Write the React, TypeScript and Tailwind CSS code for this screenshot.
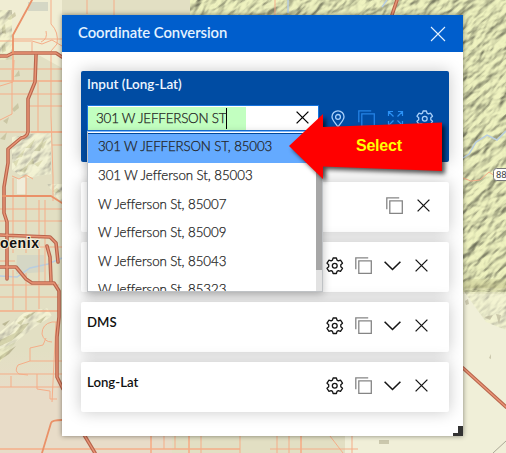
import type { ReactNode } from "react";

const suggestions = [
  "301 W JEFFERSON ST, 85003",
  "301 W Jefferson St, 85003",
  "W Jefferson St, 85007",
  "W Jefferson St, 85009",
  "W Jefferson St, 85043",
  "W Jefferson St, 85323",
];

function Icon({ children, className = "" }: { children: ReactNode; className?: string }) {
  return (
    <svg viewBox="0 0 18 18" fill="none" stroke="currentColor" strokeWidth="1.3" className={`h-[18px] w-[18px] shrink-0 ${className}`}>
      {children}
    </svg>
  );
}
const Gear = ({ className }: { className?: string }) => (
  <Icon className={className}>
    <path strokeLinejoin="round" d="M7.1 1h3.3l.6 2.1 1.4.8 2.1-.7 2 3-1.7 1.5v2.1l1.7 1.5-2 3-2.1-.7-1.4.8-.6 2.1H7.1l-.6-2.1-1.4-.8-2.1.7-2-3 1.7-1.5V7.7L1 6.2l2-3 2.1.7 1.4-.8z" />
    <circle cx="8.75" cy="8.75" r="2.4" />
  </Icon>
);
const Copy = ({ className }: { className?: string }) => (
  <Icon className={className}>
    <path d="M.8 12.3V.8h12.4M3.8 3.8h12.5v12.5H3.8z" />
  </Icon>
);
const Chevron = () => (
  <Icon><path strokeWidth="1.6" d="m.6 4.7 7.9 7.8 7.9-7.8" /></Icon>
);
const Close = () => (
  <Icon><path d="m2.6 2.6 11.8 11.8M14.4 2.6 2.6 14.4" /></Icon>
);
const Pin = () => (
  <Icon>
    <path d="M9 17C7.5 14 3 10.5 3 6.8a6 6 0 0 1 12 0C15 10.5 10.5 14 9 17z" />
    <circle cx="9" cy="6.9" r="2.4" />
  </Icon>
);
const Expand = () => (
  <Icon className="text-[#2b91f5]">
    <path strokeWidth="1.2" d="M1.5 6V1.5H6M1.5 1.5l5 5M11 1.5h4.5V6M15.5 1.5l-5 5M1.5 11v4.5H6M1.5 15.5l5-5M11 15.5h4.5V11M15.5 15.5l-5-5" />
  </Icon>
);

const highways =
  "M0 56h7l6-3h43l6 4M36 55l-1 27-7 17v33q-1 5-7 6l-13 11v14l-4 24v26l3 9v57M0 267h16l10 12 6 4h22l5 8v26l-2 20v40l6 12M0 235l50 2 6 6 2 19M47 246l3 11 1 24M83 433l12 20M463 368l43 39M397 0l-5 15";

function BaseMap() {
  return (
    <svg viewBox="0 0 506 453" className="absolute inset-0 h-full w-full">
      <defs>
        <filter id="relief" x="0" y="0" width="100%" height="100%" colorInterpolationFilters="sRGB">
          <feTurbulence type="fractalNoise" baseFrequency="0.055 0.12" numOctaves="3" seed="8" />
          <feColorMatrix values="0 0 0 0 0  0 0 0 0 0  0 0 0 0 0  1 0 0 0 0" />
          <feDiffuseLighting surfaceScale="4" diffuseConstant="1.12" lightingColor="#e2e6b4">
            <feDistantLight azimuth="270" elevation="62" />
          </feDiffuseLighting>
        </filter>
        <clipPath id="hills"><path d="M455 0h51v292H455zM190 0h280v15H190z" /></clipPath>
        <clipPath id="ridge"><path d="m0 332 24-19 23-5 5 8-19 12-17 14-16 20zM12 137l39-6v43l-26 4-13-8zM47 184h15v20zM0 10h12v50H0zM463 290h43v40l-20-8z" /></clipPath>
        <filter id="soft"><feGaussianBlur stdDeviation="5" /></filter>
        <linearGradient id="south" x1="0" y1="0" x2="0" y2="1">
          <stop offset="0" stopColor="#e8dfc8" stopOpacity="0" />
          <stop offset=".4" stopColor="#e8dcc8" />
        </linearGradient>
      </defs>
      <path fill="#e2dfc3" d="M0 0h506v453H0z" />
      <path fill="#f0edd3" d="M0 0h62v68L35 53H0z" />
      <path fill="#d9dcb2" d="M190 0h316v292H190z" />
      <path fill="#f0efd8" d="M440 288h66v165H345v-20h95z" />
      <path fill="url(#south)" d="M0 350h62v83h110v20H0z" />
      <path fill="#f0edda" d="M12 137 51 131v43L25 178 12 170zM17 178h9v16h-9zM47 184h15v20z" />
      <g clipPath="url(#hills)" opacity=".65">
        <rect x="100" y="-200" width="650" height="700" filter="url(#relief)" transform="rotate(-42 480 140)" />
      </g>
      <path fill="#b5b47c" opacity=".5" filter="url(#soft)" d="M458 281h53v11h-53z" />
      <g fill="#bbb790" opacity=".6">
        <path d="m7 19 8-7 1 4-6 4zM2 27l3-3 1 10-4-1zM2 46l3-3 1 8-4 2zM14 77l5-7 1 6zM12 109l6-6 1 5-5 4zM0 139l7-7-2 8zM3 121l6-4-2 7z" />
        <path d="m16 158 9-9-3 8zM25 148l10-9-4 9zM34 151l11-14-5 14zM19 171l10-7-4 9zM27 165l6-7 1 6zM34 164l9-4-5 7zM13 162l6-3-3 8zM39 146l8-6-4 9zM52 191l5-3 4 4-6 1z" />
      </g>
      <path fill="#f1edda" d="m0 332 24-19 23-5 5 8-19 12-17 14-16 7z" />
      <path fill="#a49e76" opacity=".6" d="m0 340 15-7 6-8 8-2-7 9-11 9-11 5zM0 356l16-10-7 8-9 6zM23 317l14-6-10 8zM36 322l10-6-5 7zM2 324l8-4-5 6zM17 323l8-5-4 7z" />
      <g clipPath="url(#ridge)" opacity=".35">
        <rect x="-300" y="-200" width="900" height="900" filter="url(#relief)" transform="rotate(-42 30 240)" />
      </g>
      <path fill="#d5d7c5" d="M17 255h27v17l-28 2zM28 2h20v9H28z" />
      <path fill="none" stroke="#b8cde0" strokeWidth="1.5" d="m0 276 17 1 13-9 18-4 14-6M463 158l6-4 7-12 11-7 10 5 9-9M288 0v13M382 7l5-7" />
      <g fill="none" stroke="#f5ad88">
        <path d="M51 0v24q8 8 6 20l-6 7v65l2 61v24M13 39h49M0 69h62M12 70v24M0 94h62M0 41h32l10 3 10-4 10 6M29 106h33M0 132h62M12 176l7 3 7-4 7 4M13 178v75M26 176v77M39 200v84M45 200v84M0 209h62M0 221h62M38 82v50M14 60 13 82 0 86M12 94v20l-12 6M32 53V42M46 31q2 8-5 11M52 145h10M0 247h62M0 261h15M0 285h59M0 297h58M13 270v40M26 273v37M39 282v27M11 376v11M0 374h62M0 387h60M52 402l4-80M57 322h-5q-10 2-10 12 2 8 10 8M46 338l-3 7-13 3v13l-12 4q-4 6 1 9l9 1M30 361h32M37 374v15l13 2v8h7M87 0v14M114 0v15" />
        <path strokeWidth="1.6" d="M0 81h62M13 53v28M31 132h31M151 434v19M189 434v19M301 436v17M0 449h240M0 311h59" />
        <path d="M164 436v13M175 436v13M201 436v17M240 436v17M277 436v17M289 436v17M270 449h88M330 436l13 17M463 178l8 3 9-1 9-8 6 4M275 0v15M352 433v20" />
      </g>
      <g fill="none" strokeLinecap="round" strokeLinejoin="round">
        <path stroke="#b8654d" strokeWidth="3.6" d={highways} />
        <path stroke="#e99475" strokeWidth="1.4" d={highways} />
        <path stroke="#ea9168" strokeWidth="1.8" d="M32 0 13 35v18M3 196h48l11 7M42 453l9-30q1-3 11-3" />
      </g>
      <path fill="#b3ad91" opacity=".6" d="m465 301 3-2 1 5-3 1zM484 317l9-2-3 5zM496 314l5 1-2 9zM489 358l2-4v5zM379 440h10v4h-10z" />
      <path stroke="#aaa796" d="m493 453 13-12" />
      <rect x="493.5" y="168.5" width="19" height="12" rx="3" fill="white" stroke="#777" />
      <text x="496" y="178" fontSize="9.5" fill="#444" fontFamily="Roboto, sans-serif">88</text>
      <text x="0" y="248" fontSize="14" fontWeight="700" fill="#111" stroke="#f4edda" strokeWidth="2" paintOrder="stroke" textLength="39" className="font-['Liberation_Sans',sans-serif]">oenix</text>
    </svg>
  );
}

function FormatCard({ label, brief = false }: { label: string; brief?: boolean }) {
  return (
    <section className="flex h-[50px] justify-between rounded-[2px] bg-white pl-[6px] shadow-[0_0_16px_rgba(0,0,0,0.22)]">
      <h2 className="pt-[11px] text-[13.2px] leading-[18px] font-semibold text-[#111]">{label}</h2>
      <div className={`flex h-[47px] items-center gap-[11px] text-[#151515] ${brief ? "pr-[16px]" : "pr-[18px]"}`}>
        {!brief && <Gear />}
        <Copy className="text-[#858585]" />
        {!brief && <Chevron />}
        <Close />
      </div>
    </section>
  );
}

export default function App() {
  return (
    <div className="relative h-[453px] w-[506px] overflow-hidden pt-[15px] pl-[62px] font-[Lato,sans-serif]">
      <BaseMap />
      <main className="relative h-[421px] w-[401px] bg-white shadow-[0_0_5px_rgba(0,0,0,0.45)]">
        <header className="flex h-[37px] items-center justify-between bg-[#005ecc] pr-[16px] pl-[16px] text-[#e4f2ff]">
          <h1 className="pb-[2px] text-[14.8px] font-semibold tracking-[-0.05px] whitespace-nowrap">Coordinate Conversion</h1>
          <svg viewBox="0 0 18 18" className="mt-px h-[18px] w-[18px]" stroke="currentColor" strokeWidth="1.1"><path d="m2 2 14 14M16 2 2 16" /></svg>
        </header>
        <div className="flex flex-col gap-[10px] pt-[19px] pr-[14px] pl-[19px]">
          <section className="relative mb-[10px] h-[91px] rounded-[2px] bg-[#004ca3] pt-[4px] pl-[6px] shadow-[0_0_16px_rgba(0,0,0,0.22)]">
            <h2 className="h-[30px] text-[13.5px] leading-[18px] font-semibold text-[#edf6ff]">Input (Long-Lat)</h2>
            <div className="flex items-center">
              <div className="flex h-[26px] w-[232px] items-center justify-between border border-[#1673dc] bg-white pr-[6px]">
                <div className="flex h-[23px] w-[158px] items-center bg-[#c2ffc0] pl-[8px]">
                  <span className="border-r border-black text-[13.4px] leading-[21px] font-light tracking-[-0.2px] whitespace-nowrap text-[#222] [-webkit-text-stroke:0.25px_currentColor]">301 W JEFFERSON ST</span>
                </div>
                <span className="text-black"><Close /></span>
              </div>
              <div className="ml-[10px] flex gap-[11px] pt-px text-[#a9d0fa]">
                <Pin />
                <Copy className="text-[#2482e5]" />
                <Expand />
                <Gear />
              </div>
            </div>
            <div className="absolute top-[60px] left-[6px] z-10 flex h-[161px] w-[236px] justify-between border border-[#bfc2c5] border-t-[#80b9ff] bg-white shadow-[0_2px_8px_rgba(0,0,0,0.25)]">
              <ul className="flex-1 overflow-hidden pt-px">
                {suggestions.map((item, index) => (
                  <li key={item} className={`flex items-center pl-[10px] text-[13.3px] font-light whitespace-nowrap text-[#222] [-webkit-text-stroke:0.25px_currentColor] ${index === 0 ? "h-[30px] border-t border-[#00489c] bg-[#64aaff] pb-[3px] tracking-[-0.12px]" : "h-[28.5px] pb-[2px] tracking-[-0.05px]"}`}>{item}</li>
                ))}
              </ul>
              <div className="h-full w-[6px] bg-[#e2e2e2]"><div className="h-[138px] bg-[#a7a7a7]" /></div>
            </div>
          </section>
          <FormatCard label="" brief />
          <FormatCard label="" />
          <FormatCard label="DMS" />
          <FormatCard label="Long-Lat" />
        </div>
        <div className="absolute right-0 bottom-0 h-[10px] w-[10px]">
          <div className="ml-[5px] h-[7px] w-[5px] bg-[#333]" />
          <div className="h-[3px] bg-[#333]" />
        </div>
      </main>
      <svg viewBox="0 0 506 453" className="pointer-events-none absolute inset-0 z-20 h-full w-full">
        <path d="m289 146 34-32v13l119-4.5V171l-119-4.5V179z" fill="#ff0000" className="drop-shadow-[3px_3px_2px_rgba(0,0,0,0.65)]" />
        <text x="356" y="151" fill="#ffff00" fontSize="16" fontWeight="700" textLength="46" className="font-['Liberation_Sans',sans-serif]">Select</text>
      </svg>
    </div>
  );
}
